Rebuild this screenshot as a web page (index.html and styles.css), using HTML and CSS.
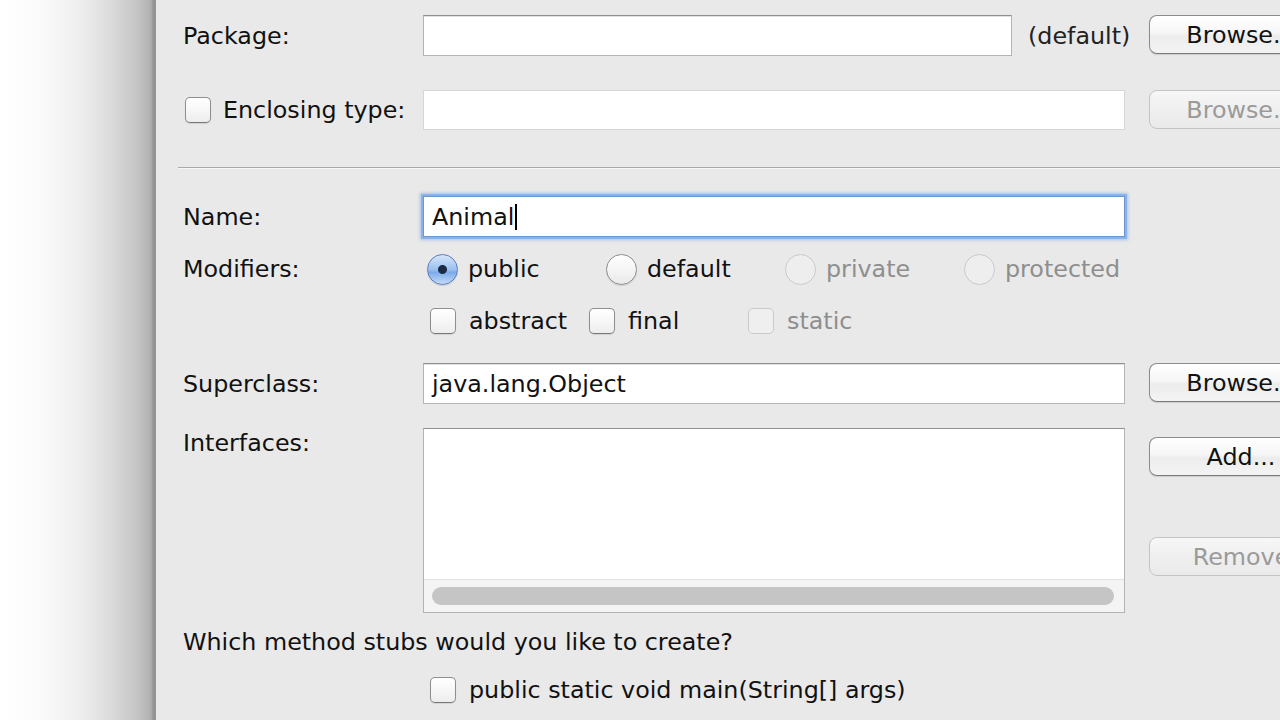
FILE: index.html
```html
<!DOCTYPE html>
<html>
<head>
<meta charset="utf-8">
<link rel="stylesheet" href="styles.css">
</head>
<body>
<div class="desk"></div>
<div class="dialog">
  <div class="row r-package">
    <div class="label">Package:</div>
    <div class="field field-package">
      <div class="input input-package"></div>
      <span class="hint">(default)</span>
    </div>
    <div class="btn">Browse...</div>
  </div>

  <div class="row r-enclosing">
    <div class="label label-check"><span class="check"></span><span>Enclosing type:</span></div>
    <div class="field"><div class="input input-disabled"></div></div>
    <div class="btn btn-disabled">Browse...</div>
  </div>

  <div class="sep"></div>

  <div class="row r-name">
    <div class="label">Name:</div>
    <div class="field"><div class="input input-focus"><span>Animal</span><span class="caret"></span></div></div>
  </div>

  <div class="row r-mods">
    <div class="label">Modifiers:</div>
    <div class="field options">
      <div class="opt opt-radio"><span class="radio radio-on"></span><span>public</span></div>
      <div class="opt opt-radio"><span class="radio"></span><span>default</span></div>
      <div class="opt opt-radio disabled"><span class="radio radio-disabled"></span><span>private</span></div>
      <div class="opt opt-radio disabled"><span class="radio radio-disabled"></span><span>protected</span></div>
    </div>
  </div>

  <div class="row r-checks">
    <div class="label"></div>
    <div class="field options">
      <div class="opt opt-check"><span class="check"></span><span>abstract</span></div>
      <div class="opt opt-check"><span class="check"></span><span>final</span></div>
      <div class="opt opt-check disabled"><span class="check check-disabled"></span><span>static</span></div>
    </div>
  </div>

  <div class="row r-super">
    <div class="label">Superclass:</div>
    <div class="field"><div class="input"><span>java.lang.Object</span></div></div>
    <div class="btn">Browse...</div>
  </div>

  <div class="row r-ifaces">
    <div class="label label-top">Interfaces:</div>
    <div class="field">
      <div class="listbox">
        <div class="list-body"></div>
        <div class="hscroll"><div class="thumb"></div></div>
      </div>
    </div>
    <div class="btn-col">
      <div class="btn">Add...</div>
      <div class="btn btn-disabled">Remove</div>
    </div>
  </div>

  <div class="row r-question">
    <div class="question">Which method stubs would you like to create?</div>
  </div>

  <div class="row r-main">
    <div class="label"></div>
    <div class="field options">
      <div class="opt opt-check opt-wide"><span class="check"></span><span>public static void main(String[] args)</span></div>
    </div>
  </div>
</div>
</body>
</html>
```

FILE: styles.css
```css
html, body {
  margin: 0;
  padding: 0;
  width: 1280px;
  height: 720px;
  overflow: hidden;
}

body {
  display: flex;
  font-family: "DejaVu Sans", "Liberation Sans", sans-serif;
  font-size: 23.8px;
  color: #111111;
}

.desk {
  width: 156px;
  flex: none;
  background: linear-gradient(to right, #ffffff 0px, #fbfbfb 40px, #eeeeee 80px, #dcdcdc 110px, #c4c4c4 138px, #b2b2b2 150px, #a6a6a6 152px, #959595 153px, #959595 156px);
}

.dialog {
  flex: 1;
  background: #e9e9e9;
  padding-left: 27px;
  display: flex;
  flex-direction: column;
  overflow: hidden;
}

.row {
  display: flex;
  align-items: center;
  flex: none;
}

.label {
  width: 240px;
  flex: none;
  line-height: 30px;
  white-space: nowrap;
}

.label-check {
  display: flex;
  align-items: center;
}

.label-check .check {
  margin-left: 2px;
  margin-right: 12px;
}

.label-top {
  align-self: flex-start;
}

.field {
  width: 702px;
  flex: none;
  display: flex;
  align-items: center;
}

.input {
  box-sizing: border-box;
  width: 100%;
  height: 41px;
  background: #ffffff;
  border: 1px solid #b4b4b4;
  border-top-color: #8f8f8f;
  box-shadow: inset 0 1px 0 #e2e2e2;
  padding-left: 8px;
  display: flex;
  align-items: center;
  line-height: 30px;
  white-space: nowrap;
}

.input-package {
  width: 589px;
  flex: none;
}

.hint {
  margin-left: 16px;
  white-space: nowrap;
  color: #222222;
}

.input-disabled {
  height: 40px;
  border-color: #d6d6d6;
  box-shadow: none;
}

.input-focus {
  border: 1px solid #6b95cf;
  box-shadow: 0 0 0 2px #8ab3ea, 0 0 3px 3px rgba(120, 165, 230, 0.55);
}

.caret {
  display: inline-block;
  width: 2px;
  height: 26px;
  background: #000;
  margin-left: 1px;
}

.btn {
  box-sizing: border-box;
  width: 184px;
  height: 39px;
  margin-left: 24px;
  flex: none;
  border: 1px solid #8c8c8c;
  border-bottom-color: #7a7a7a;
  border-radius: 8px;
  background: linear-gradient(to bottom, #ffffff 0%, #f6f6f6 45%, #ececec 55%, #f4f4f4 100%);
  box-shadow: 0 1px 1px rgba(0, 0, 0, 0.12);
  display: flex;
  align-items: center;
  justify-content: center;
  white-space: nowrap;
  color: #111111;
}

.btn-disabled {
  border-color: #c4c4c4;
  background: linear-gradient(to bottom, #f7f7f7 0%, #efefef 50%, #eaeaea 100%);
  box-shadow: none;
  color: #9a9a9a;
}

.sep {
  flex: none;
  margin-left: -5px;
  height: 1px;
  background: #a9a9a9;
  border-bottom: 1px solid #f6f6f6;
}

.r-package { margin-top: 15px; height: 41px; }
.r-package .btn { align-self: flex-start; }
.r-enclosing { margin-top: 34px; height: 40px; }
.r-enclosing .btn { align-self: flex-start; }
.sep { margin-top: 37px; }
.r-name { margin-top: 27px; height: 41px; }
.r-mods { margin-top: 16px; height: 32px; }
.r-checks { margin-top: 20px; height: 32px; }
.r-super { margin-top: 26px; height: 41px; }
.r-super .btn { align-self: flex-start; }
.r-ifaces { margin-top: 24px; height: 185px; align-items: flex-start; }
.r-question { margin-top: 14px; height: 30px; line-height: 30px; }
.r-main { margin-top: 17px; height: 32px; }

.options {
  align-items: center;
}

.opt {
  display: flex;
  align-items: center;
  flex: none;
  white-space: nowrap;
}

.opt-radio { width: 179px; }
.opt-radio .radio { margin-left: 4px; margin-right: 10px; }
.opt-check { width: 159px; }
.opt-check .check { margin-left: 7px; margin-right: 13px; }
.opt-wide { width: auto; }

.disabled { color: #8e8e8e; }

.check {
  box-sizing: border-box;
  width: 26px;
  height: 26px;
  flex: none;
  display: inline-block;
  border: 1px solid #8e8e8e;
  border-bottom-color: #777;
  border-radius: 5px;
  background: linear-gradient(to bottom, #ffffff 0%, #f7f7f7 50%, #ededed 100%);
  box-shadow: 0 1px 1px rgba(0, 0, 0, 0.1);
}

.check-disabled {
  border-color: #cacaca;
  background: #efefef;
  box-shadow: none;
}

.radio {
  box-sizing: border-box;
  width: 31px;
  height: 31px;
  flex: none;
  display: inline-block;
  border-radius: 50%;
  border: 1px solid #8e8e8e;
  background: linear-gradient(to bottom, #ffffff 0%, #f5f5f5 50%, #e9e9e9 100%);
  box-shadow: 0 1px 1px rgba(0, 0, 0, 0.12);
}

.radio-on {
  border-color: #5a7fb8;
  background: radial-gradient(circle at 50% 50%, #1c2a44 0, #1c2a44 4px, transparent 5px),
              linear-gradient(to bottom, #d6e6fb 0%, #9cc0ef 50%, #7eaae8 60%, #c4dcfa 100%);
}

.radio-disabled {
  border-color: #cacaca;
  background: #eeeeee;
  box-shadow: none;
}

.listbox {
  box-sizing: border-box;
  width: 100%;
  height: 185px;
  border: 1px solid #b3b3b3;
  border-top-color: #8f8f8f;
  background: #ffffff;
  display: flex;
  flex-direction: column;
}

.list-body {
  flex: 1;
}

.hscroll {
  height: 33px;
  flex: none;
  background: #f4f4f4;
  border-top: 1px solid #e3e3e3;
  box-sizing: border-box;
  padding: 7px 10px 0 8px;
}

.thumb {
  height: 18px;
  border-radius: 9px;
  background: #c5c5c5;
}

.btn-col {
  display: flex;
  flex-direction: column;
  flex: none;
}

.btn-col .btn { margin-top: 9px; }
.btn-col .btn + .btn { margin-top: 61px; }

.question {
  white-space: nowrap;
}
```
